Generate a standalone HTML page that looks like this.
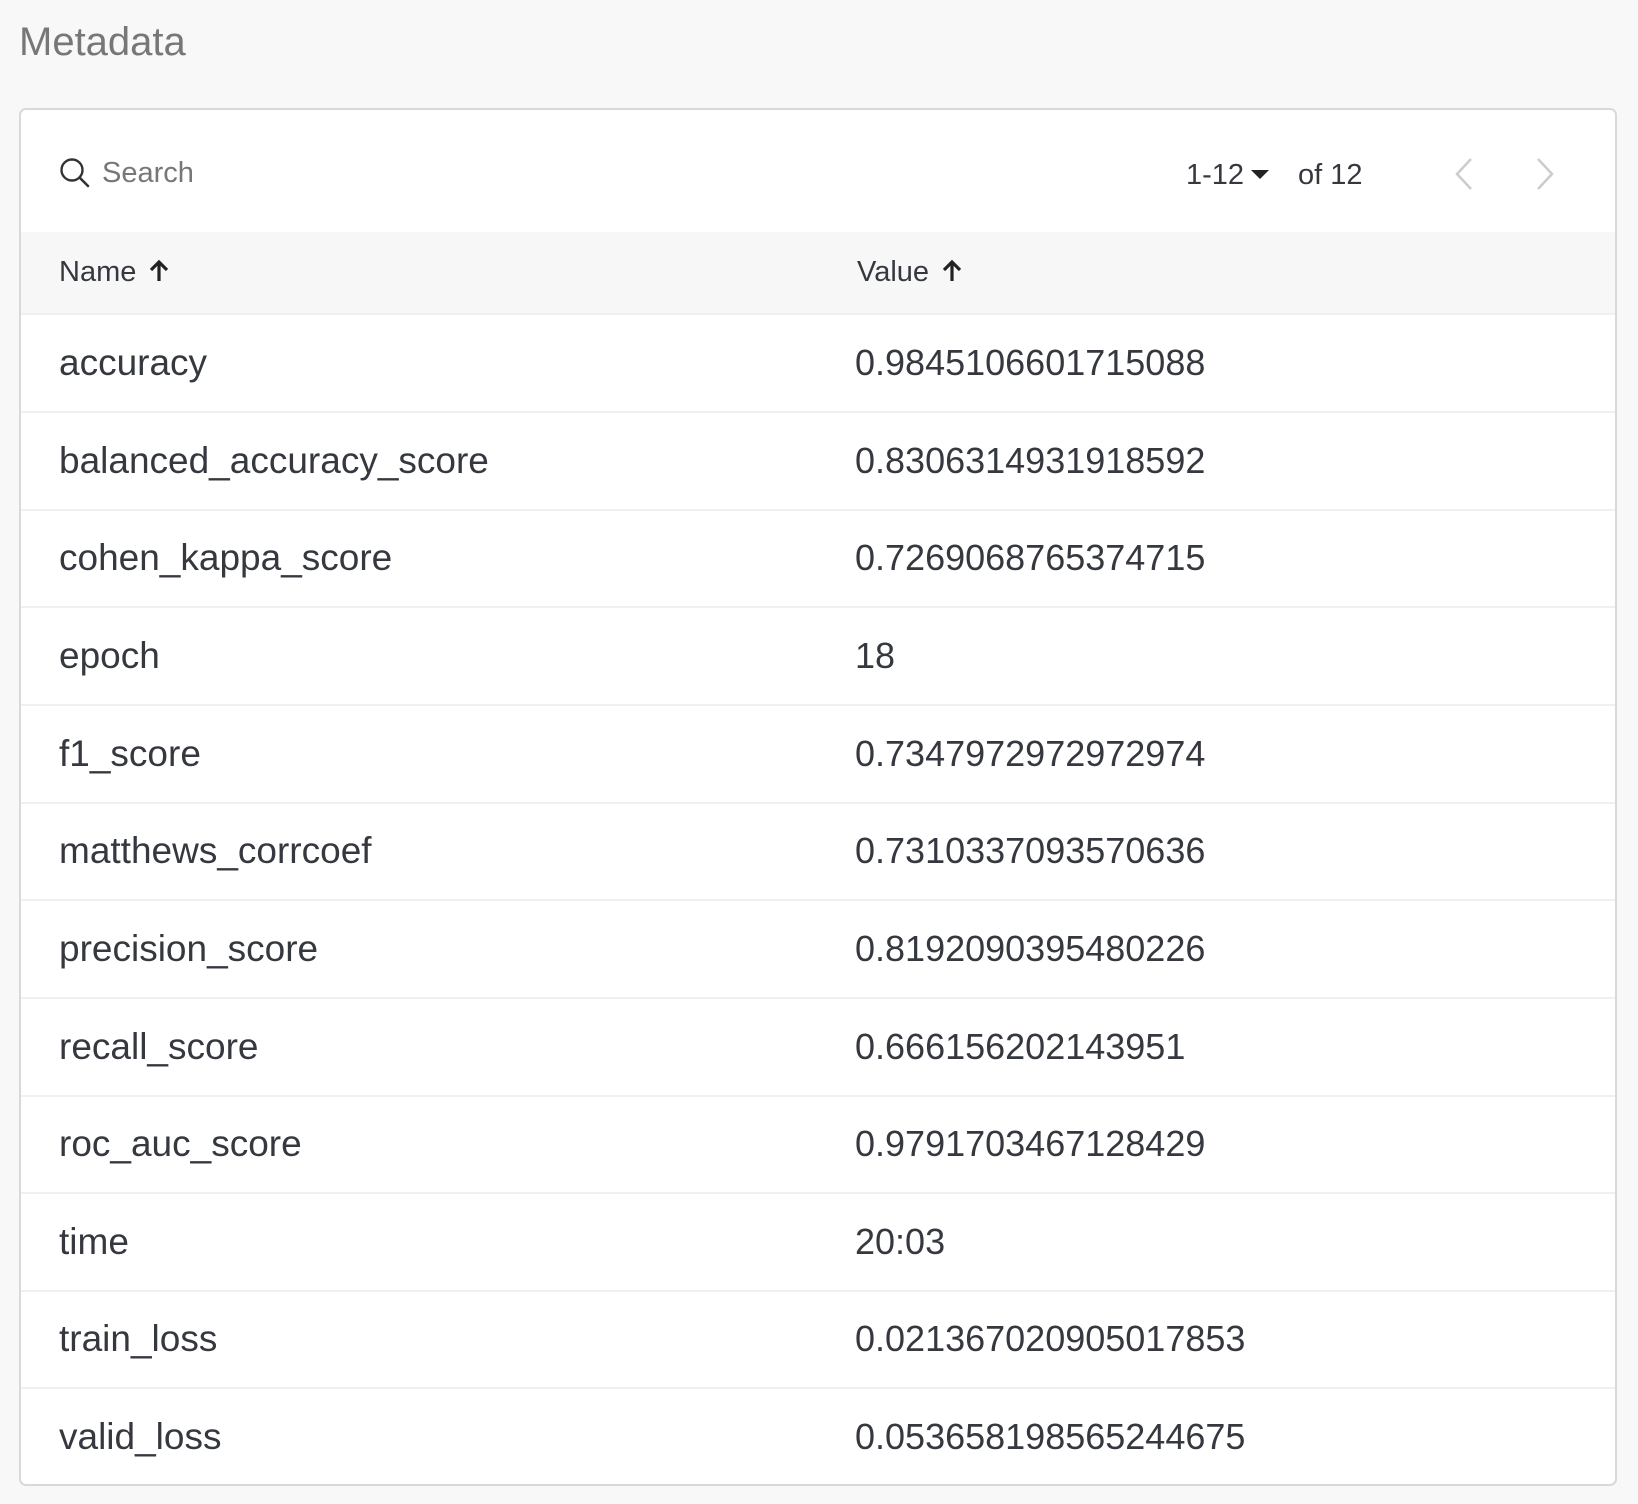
<!DOCTYPE html>
<html><head><style>
html,body{margin:0;padding:0;background:#f8f8f8;width:1638px;height:1504px;overflow:hidden;font-family:"Liberation Sans",sans-serif;}
.title{position:absolute;left:19px;top:18px;font-size:40px;color:#777;line-height:48px;}
.card{position:absolute;left:19px;top:108px;width:1594px;height:1374px;border:2px solid #d9d9d9;border-radius:7px;background:#fff;overflow:hidden;}
.search{position:absolute;left:38px;top:43px;height:40px;display:flex;align-items:center;}
.search span{font-size:29px;color:#777;margin-left:11px;}
.pg{position:absolute;top:45px;font-size:29px;color:#35393f;line-height:40px;}
.hdr{position:absolute;left:0;top:122px;width:100%;height:81px;background:#f7f7f7;border-bottom:2px solid #f0f0f0;}
.hdr div{position:absolute;top:0;line-height:81px;font-size:29px;color:#35393f;}
.hdr svg{vertical-align:-2px;margin-left:12px}
.row{position:absolute;left:0;width:100%;height:96px;border-bottom:2px solid #f0f0f0;}
.row div{position:absolute;top:0;line-height:96px;color:#35393f;}
.n{left:38px;font-size:37px}.v{left:834px;font-size:36px}
</style></head><body>
<div class="title">Metadata</div>
<div class="card">
 <div class="search"><svg width="32" height="32" viewBox="0 0 32 32"><circle cx="13" cy="13" r="10.5" fill="none" stroke="#333" stroke-width="2.4"/><line x1="20.5" y1="20.5" x2="29" y2="29" stroke="#333" stroke-width="2.6" stroke-linecap="round"/></svg><span>Search</span></div>
 <div class="pg" style="left:1165px">1-12</div>
 <svg style="position:absolute;left:1230px;top:60px" width="18" height="10"><path d="M0 0H18L9 9Z" fill="#222"/></svg>
 <div class="pg" style="left:1277px">of 12</div>
 <svg style="position:absolute;left:1432px;top:47px" width="22" height="34"><path d="M18 2L4 17L18 32" fill="none" stroke="#ccc" stroke-width="2.5"/></svg>
 <svg style="position:absolute;left:1513px;top:47px" width="22" height="34"><path d="M4 2L18 17L4 32" fill="none" stroke="#ccc" stroke-width="2.5"/></svg>
 <div class="hdr"><div style="left:38px">Name<svg width="22" height="24" viewBox="0 0 22 24"><path d="M11 22V4M3 11L11 3L19 11" fill="none" stroke="#222" stroke-width="3.2"/></svg></div><div style="left:836px">Value<svg width="22" height="24" viewBox="0 0 22 24"><path d="M11 22V4M3 11L11 3L19 11" fill="none" stroke="#222" stroke-width="3.2"/></svg></div></div>
 <div class="row" style="top:205px"><div class="n">accuracy</div><div class="v">0.9845106601715088</div></div>
 <div class="row" style="top:303px"><div class="n">balanced_accuracy_score</div><div class="v">0.8306314931918592</div></div>
 <div class="row" style="top:400px"><div class="n">cohen_kappa_score</div><div class="v">0.7269068765374715</div></div>
 <div class="row" style="top:498px"><div class="n">epoch</div><div class="v">18</div></div>
 <div class="row" style="top:596px"><div class="n">f1_score</div><div class="v">0.7347972972972974</div></div>
 <div class="row" style="top:693px"><div class="n">matthews_corrcoef</div><div class="v">0.7310337093570636</div></div>
 <div class="row" style="top:791px"><div class="n">precision_score</div><div class="v">0.8192090395480226</div></div>
 <div class="row" style="top:889px"><div class="n">recall_score</div><div class="v">0.666156202143951</div></div>
 <div class="row" style="top:986px"><div class="n">roc_auc_score</div><div class="v">0.9791703467128429</div></div>
 <div class="row" style="top:1084px"><div class="n">time</div><div class="v">20:03</div></div>
 <div class="row" style="top:1181px"><div class="n">train_loss</div><div class="v">0.021367020905017853</div></div>
 <div class="row" style="top:1279px;border-bottom:none"><div class="n">valid_loss</div><div class="v">0.053658198565244675</div></div>
</div>
</body></html>
